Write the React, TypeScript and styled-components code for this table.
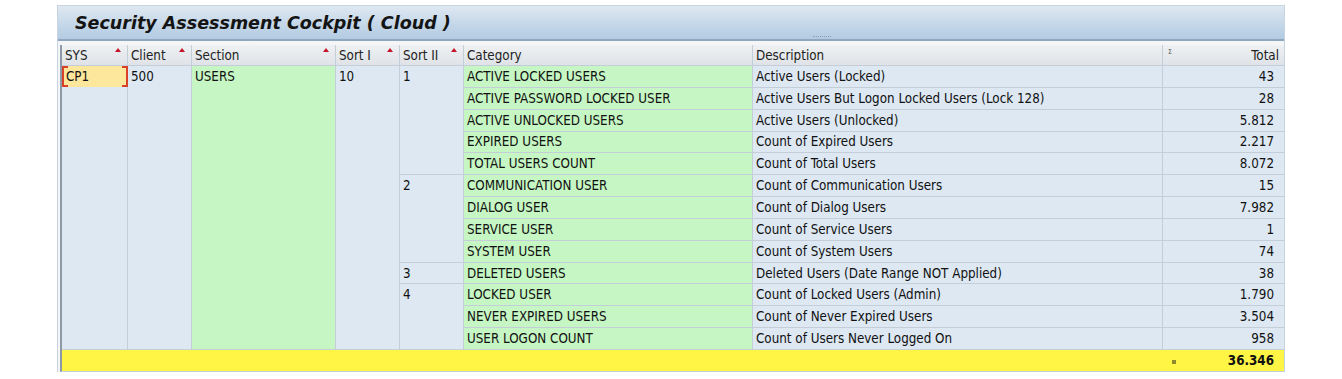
import styled, { createGlobalStyle } from "styled-components";

const GlobalStyle = createGlobalStyle`
  body {
    margin: 0;
    background: #ffffff;
    font-family: "DejaVu Sans Condensed", "DejaVu Sans", sans-serif;
  }
`;

const Page = styled.div`
  padding: 5px 0 0 57px;
  width: 1228px;
`;

const Panel = styled.div`
  border: 1px solid #c7d4e1;
  border-bottom: none;
  background: #f3f5f7;
`;

const TitleBar = styled.div`
  position: relative;
  height: 33px;
  display: flex;
  align-items: center;
  padding-left: 17px;
  background: linear-gradient(#dfe8f2, #c3d6e8 60%, #b3cbe2);
  border-bottom: 2px solid #8ea6be;
`;

const Title = styled.h1`
  margin: 0;
  font-family: "DejaVu Sans", sans-serif;
  font-weight: bold;
  font-style: italic;
  font-size: 17.5px;
  color: #141414;
`;

const Grip = styled.span`
  position: absolute;
  left: 755px;
  bottom: 1px;
  width: 18px;
  height: 1px;
  border-top: 1px dotted #8a9db2;
`;

const Body = styled.div`
  padding-top: 4px;
  padding-left: 2px;
`;

const Grid = styled.div`
  display: grid;
  grid-template-columns: 65px 63px 143px 63px 63px 288px 409px 121px;
  grid-template-rows: 20px repeat(13, 20.85px) 21px;
  gap: 1px;
  background: #c4ced8;
  border-left: 2px solid #8d9aa6;
  border-bottom: 1px solid #c4ced8;
  font-size: 13.3px;
  color: #111;
`;

const Head = styled.div<{ $right?: boolean }>`
  position: relative;
  display: flex;
  align-items: center;
  justify-content: ${(p) => (p.$right ? "flex-end" : "flex-start")};
  padding: 0 ${(p) => (p.$right ? "5px" : "3px")};
  background: linear-gradient(#eff1f3, #dfe3e7);
  color: #222;
`;

const SortMark = styled.span`
  position: absolute;
  top: 3px;
  right: 6px;
  width: 0;
  height: 0;
  border-left: 3px solid transparent;
  border-right: 3px solid transparent;
  border-bottom: 4px solid #c4142a;
`;

const SumMark = styled.span`
  position: absolute;
  left: 5px;
  top: 3px;
  font-size: 7px;
  color: #555;
`;

const Cell = styled.div<{
  $col: number;
  $row: number;
  $span?: number;
  $tone?: "blue" | "green";
  $right?: boolean;
}>`
  grid-column: ${(p) => p.$col};
  grid-row: ${(p) => p.$row} / span ${(p) => p.$span ?? 1};
  display: flex;
  align-items: ${(p) => ((p.$span ?? 1) > 1 ? "flex-start" : "center")};
  justify-content: ${(p) => (p.$right ? "flex-end" : "flex-start")};
  padding: ${(p) => ((p.$span ?? 1) > 1 ? "3px" : "0")} ${(p) => (p.$right ? "10px" : "3px")} 0 3px;
  line-height: 15px;
  white-space: nowrap;
  background: ${(p) => (p.$tone === "green" ? "#c6f6c3" : "#dde8f3")};
`;

const SpanCell = styled(Cell)`
  flex-direction: column;
  align-items: stretch;
  padding: 0;
`;

const SelectedValue = styled.div`
  position: relative;
  height: 20.85px;
  display: flex;
  align-items: center;
  padding-left: 4px;
  background: #fde79c;
  &::before,
  &::after {
    content: "";
    position: absolute;
    top: 0;
    bottom: 0;
    width: 4px;
    border-top: 2px solid #d8402a;
    border-bottom: 2px solid #d8402a;
  }
  &::before {
    left: 0;
    border-left: 2px solid #d8402a;
  }
  &::after {
    right: -1px;
    border-right: 2px solid #d8402a;
  }
`;

const TotalRow = styled.div`
  grid-column: 1 / -1;
  grid-row: 15;
  display: flex;
  align-items: center;
  justify-content: flex-end;
  gap: 52px;
  padding-right: 10px;
  background: #fff545;
  font-weight: bold;
`;

const Dot = styled.span`
  width: 4px;
  height: 4px;
  background: #8c8a2a;
  margin-top: 3px;
`;

const headers = [
  { label: "SYS", sort: true },
  { label: "Client", sort: true },
  { label: "Section", sort: true },
  { label: "Sort I", sort: true },
  { label: "Sort II", sort: true },
  { label: "Category" },
  { label: "Description" },
];

const rows = [
  ["ACTIVE LOCKED USERS", "Active Users (Locked)", "43"],
  ["ACTIVE PASSWORD LOCKED USER", "Active Users But Logon Locked Users (Lock 128)", "28"],
  ["ACTIVE UNLOCKED USERS", "Active Users (Unlocked)", "5.812"],
  ["EXPIRED USERS", "Count of Expired Users", "2.217"],
  ["TOTAL USERS COUNT", "Count of Total Users", "8.072"],
  ["COMMUNICATION USER", "Count of Communication Users", "15"],
  ["DIALOG USER", "Count of Dialog Users", "7.982"],
  ["SERVICE USER", "Count of Service Users", "1"],
  ["SYSTEM USER", "Count of System Users", "74"],
  ["DELETED USERS", "Deleted Users (Date Range NOT Applied)", "38"],
  ["LOCKED USER", "Count of Locked Users (Admin)", "1.790"],
  ["NEVER EXPIRED USERS", "Count of Never Expired Users", "3.504"],
  ["USER LOGON COUNT", "Count of Users Never Logged On", "958"],
];

const groups = [
  { label: "1", start: 2, span: 5 },
  { label: "2", start: 7, span: 4 },
  { label: "3", start: 11, span: 1 },
  { label: "4", start: 12, span: 3 },
];

function App() {
  return (
    <Page>
      <GlobalStyle />
      <Panel>
        <TitleBar>
          <Title>Security Assessment Cockpit ( Cloud )</Title>
          <Grip />
        </TitleBar>
        <Body>
          <Grid>
            {headers.map((h) => (
              <Head key={h.label}>
                {h.label}
                {h.sort && <SortMark />}
              </Head>
            ))}
            <Head $right>
              <SumMark>Σ</SumMark>
              Total
            </Head>

            <SpanCell $col={1} $row={2} $span={13}>
              <SelectedValue>CP1</SelectedValue>
            </SpanCell>
            <Cell $col={2} $row={2} $span={13}>500</Cell>
            <Cell $col={3} $row={2} $span={13} $tone="green">USERS</Cell>
            <Cell $col={4} $row={2} $span={13}>10</Cell>
            {groups.map((g) => (
              <Cell key={g.label} $col={5} $row={g.start} $span={g.span}>
                {g.label}
              </Cell>
            ))}
            {rows.map(([cat, desc, total], i) => [
              <Cell key={`c${i}`} $col={6} $row={i + 2} $tone="green">{cat}</Cell>,
              <Cell key={`d${i}`} $col={7} $row={i + 2}>{desc}</Cell>,
              <Cell key={`t${i}`} $col={8} $row={i + 2} $right>{total}</Cell>,
            ])}
            <TotalRow>
              <Dot />
              36.346
            </TotalRow>
          </Grid>
        </Body>
      </Panel>
    </Page>
  );
}

export default App;
